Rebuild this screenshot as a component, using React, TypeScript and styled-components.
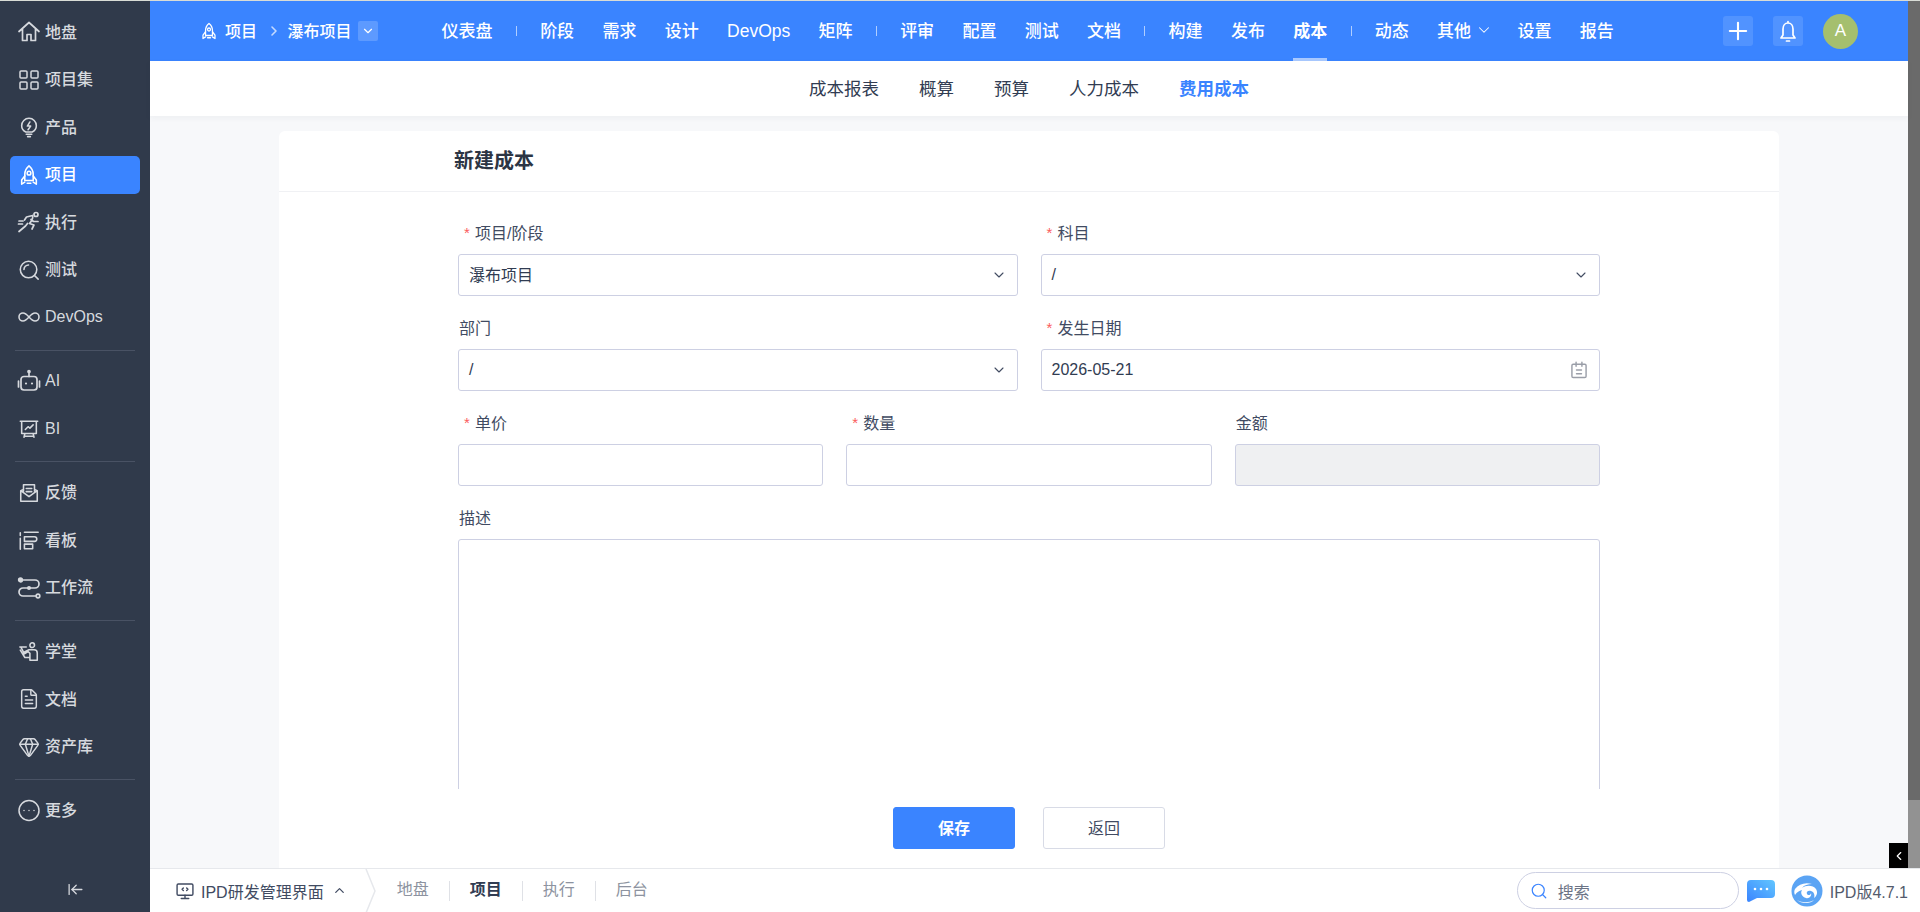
import React, { FC, ReactNode } from 'react';
import styled, { createGlobalStyle } from 'styled-components';
import {
    ArrowLeftToLine,
    ChevronDown,
    ChevronLeft,
    ChevronRight,
    ChevronUp,
    CircleEllipsis,
    FileText,
    Gem,
    Infinity as InfinityIcon,
    LayoutGrid,
    Plus,
    Search,
} from 'lucide-react';

const Global = createGlobalStyle`
  html, body {
    margin: 0;
    padding: 0;
    height: 912px;
    overflow: hidden;
    background: #fff;
    font-family: "Liberation Sans", "Noto Sans CJK SC", sans-serif;
    color: #313c52;
  }
  * { box-sizing: border-box; }
`;

const Line: FC<{ size?: number; children: ReactNode }> = ({ size = 22, children }) => (
    <svg width={size} height={size} viewBox="0 0 24 24" fill="none" stroke="currentColor" strokeWidth="1.7" strokeLinecap="round" strokeLinejoin="round">
        {children}
    </svg>
);

const HomeIcon: FC = () => (
    <Line size={24}>
        <path d="M2 11.500 12 2.500l10 9M5.500 9v11.500h4.500V14.500h4v6h4.500V9" />
    </Line>
);

const RocketIcon: FC<{ size?: number }> = ({ size }) => (
    <Line size={size}>
        <path d="M12 2c3 2.400 4.600 5.800 4.600 9.400V18H7.400v-6.600C7.400 7.800 9 4.400 12 2z" />
        <circle cx="12" cy="10" r="2" />
        <path d="M7.400 13 4 17.500V22l3.400-2.200M16.600 13l3.400 4.500V22l-3.400-2.200M10 21h4" />
    </Line>
);

const BulbIcon: FC = () => (
    <Line>
        <path d="M8.500 17.500C5.800 16 4 13.500 4 10.500a8 8 0 0 1 16 0c0 3-1.800 5.500-4.500 7z" />
        <path d="M9 20h6M10.500 22.500h3M13 6.500l-2.800 4.500h3.600L11 15" />
    </Line>
);

const RunnerIcon: FC = () => (
    <Line size={24}>
        <circle cx="19" cy="4.500" r="2" />
        <path d="M2 21.500 8.500 16l2-2.500M15.500 5.500 9.500 7l-2 3M15.500 5.500c1 2.500-.5 5-3 8l4.500 1.500-2 4M14 9.500l2.500 2H21M2 11h4M1.500 14h4" />
    </Line>
);

const LensIcon: FC = () => (
    <Line>
        <circle cx="11.500" cy="11.500" r="9" />
        <path d="m18 18 4 4M6.500 11.500a5 5 0 0 1 5-5" />
    </Line>
);

const BotIcon: FC = () => (
    <Line size={24}>
        <circle cx="12" cy="2.500" r="1" fill="currentColor" />
        <path d="M12 3v4.500M1.500 12v6M22.500 12v6" />
        <rect x="4" y="7.500" width="16" height="13.500" rx="3" />
        <path d="M9 14.500h.01M15 14.500h.01" strokeWidth="2.200" />
    </Line>
);

const BoardChartIcon: FC = () => (
    <Line>
        <path d="M2.500 3.500h19M4 3.500V17h16V3.500M7.500 17l-1 4M16.500 17l1 4M7 20h10" />
        <path d="m8 12.500 3-3 2 1.500 3.500-3.500" />
    </Line>
);

const MailIcon: FC = () => (
    <Line>
        <path d="M6 10V3h12v7M3 9.500V21h18V9.500L18 8M6 8 3 9.500l9 6.500 9-6.500M9 7h6M9 10.500h6" />
    </Line>
);

const KanbanIcon: FC = () => (
    <Line>
        <path d="M2.500 10v12M2.500 4v3M7 3.500h15M7 8.500h11a1.500 1.500 0 0 1 0 5H7zM7 16.500h9v5H7z" />
    </Line>
);

const RouteIcon: FC = () => (
    <Line size={24}>
        <circle cx="3.500" cy="4" r="1.800" fill="currentColor" />
        <circle cx="21" cy="20" r="1.800" />
        <path d="M5.500 4H18a4 4 0 0 1 0 8H6a4 4 0 0 0 0 8h13M10 12h4" />
        <circle cx="12" cy="12" r="1.200" fill="currentColor" />
    </Line>
);

const TeacherIcon: FC = () => (
    <Line>
        <circle cx="15.500" cy="4.500" r="2.500" />
        <path d="M2 6.500h7M3 6.500 7 14l4-2.500 2 2V21h8v-8a3.500 3.500 0 0 0-3.500-3.500H12L7 12M2.500 10l5 8h5" />
    </Line>
);

const BellIcon: FC = () => (
    <Line size={24}>
        <path d="M12 2.500v1.500M12 4c-3 0-5 2.500-5 6v6l-2 3h14l-2-3v-6c0-3.500-2-6-5-6zM10.500 22h3" />
    </Line>
);

const MonitorIcon: FC = () => (
    <Line size={20}>
        <rect x="2.500" y="3.500" width="19" height="13.500" rx="1.500" />
        <path d="M12 17v4M7.500 21h9M10 8.500 8.500 10l1.500 1.500M14 8.500l1.500 1.500-1.500 1.500" />
    </Line>
);

const CalendarIcon: FC = () => (
    <Line size={20}>
        <rect x="3.500" y="5" width="17" height="16" rx="1.500" />
        <path d="M8.500 2.500v5M15.500 2.500v5M9 12h6M9 16.500h6" />
    </Line>
);

const ChatIcon: FC = () => (
    <svg width="30" height="24" viewBox="0 0 30 24">
        <defs>
            <linearGradient id="chatFill" x1="0" y1="1" x2="1" y2="0">
                <stop offset="0" stopColor="#3a84ff" />
                <stop offset="1" stopColor="#62c6ff" />
            </linearGradient>
        </defs>
        <path d="M5 1h20a4 4 0 0 1 4 4v10a4 4 0 0 1-4 4H11l-8 4a2 2 0 0 1-2-2V5a4 4 0 0 1 4-4z" fill="url(#chatFill)" />
        <circle cx="9" cy="10" r="1.300" fill="#fff" />
        <circle cx="15" cy="10" r="1.300" fill="#fff" />
        <circle cx="21" cy="10" r="1.300" fill="#fff" />
    </svg>
);

const LogoIcon: FC = () => (
    <svg width="32" height="32" viewBox="0 0 32 32">
        <circle cx="16" cy="16" r="15.500" fill="#5ba4f4" />
        <path d="M4 14c4-5 10-7 17-5-4 0-8 1-10 4 4-3 11-3 14 1 2 3 1 7-2 9 1-3 0-6-3-7-3-1-5 1-4 3s4 1 4-1c1 3-2 6-5 5-4-1-6-5-4-8-3 1-5 2-7 5-1-2-1-4 0-6z" fill="#fff" />
        <path d="M6 25c5 3 12 3 17 0-3 4-13 4-17 0z" fill="#fff" />
    </svg>
);

const Shell = styled.div`
  width: 1920px;
  height: 912px;
  padding-top: 1px;
  background: #d9dcd6;
  display: flex;
  overflow: hidden;
`;

const Sidebar = styled.aside`
  width: 150px;
  flex: none;
  background: #303a4b;
  padding-top: 12px;
  display: flex;
  flex-direction: column;
  color: #d6d9de;
`;

const SideGroup = styled.div`
  display: flex;
  flex-direction: column;
  gap: 9.5px;
`;

const SideDivider = styled.div`
  height: 1px;
  margin: 13.5px 15px 11.5px;
  background: #495264;
`;

const SideItem = styled.div<{ $active?: boolean }>`
  height: 38px;
  margin: 0 10px;
  padding-left: 7px;
  border-radius: 5px;
  display: flex;
  align-items: center;
  gap: 4px;
  font-size: 16px;
  background: ${p => (p.$active ? '#3a84ff' : 'transparent')};
  color: ${p => (p.$active ? '#fff' : 'inherit')};
`;

const SideIcon = styled.span`
  width: 24px;
  height: 24px;
  flex: none;
  display: flex;
  align-items: center;
  justify-content: center;
`;

const SideLabel = styled.span<{ $latin: boolean }>`
  padding-bottom: ${p => (p.$latin ? 0 : 3)}px;
  font-weight: 500;
`;

const Collapse = styled.div`
  margin-top: auto;
  height: 34px;
  display: flex;
  justify-content: center;
  padding-top: 3px;
`;

const Right = styled.div`
  flex: 1;
  min-width: 0;
  display: flex;
  flex-direction: column;
`;

const Upper = styled.div`
  flex: 1;
  min-height: 0;
  display: flex;
  position: relative;
`;

const Content = styled.div`
  flex: 1;
  min-width: 0;
  display: flex;
  flex-direction: column;
  background: #f7f8fa;
`;

const Rail = styled.div`
  width: 12px;
  flex: none;
  background: #929292;
`;

const RailThumb = styled.div`
  height: 799px;
  background: #6a6a6a;
`;

const RailToggle = styled.div`
  position: absolute;
  right: 12px;
  bottom: 0;
  width: 19px;
  height: 25px;
  background: #000;
  color: #fff;
  display: flex;
  align-items: center;
  justify-content: center;
`;

const Header = styled.header`
  height: 60px;
  flex: none;
  background: #3a84ff;
  padding-left: 50px;
  display: flex;
  align-items: center;
  color: #fff;
`;

const Crumb = styled.div`
  display: flex;
  align-items: center;
  font-size: 16px;
  color: #fff;
`;

const CrumbText = styled.span`
  padding-bottom: 3px;
  font-weight: 500;
  &:nth-child(2) {
    margin-left: 7px;
  }
`;

const CrumbArrow = styled.span`
  margin: 0 6px 0 8.5px;
  display: flex;
  color: #c4daff;
`;

const CrumbSelect = styled.span`
  width: 20px;
  height: 20px;
  margin-left: 6px;
  border-radius: 2px;
  background: rgba(255, 255, 255, 0.18);
  display: flex;
  align-items: center;
  justify-content: center;
`;

const Nav = styled.nav`
  margin-left: 64px;
  height: 60px;
  display: flex;
  align-items: center;
  gap: 28.3px;
`;

const NavItem = styled.div<{ $active?: boolean; $latin?: boolean; $tight?: boolean }>`
  height: 60px;
  position: relative;
  margin-left: ${p => (p.$tight ? -4 : 0)}px;
  padding-bottom: ${p => (p.$latin ? 0 : 3)}px;
  display: flex;
  align-items: center;
  gap: 4px;
  font-size: ${p => (p.$latin ? 17.5 : 17)}px;
  font-weight: ${p => (p.$active ? 700 : 500)};
  white-space: nowrap;
  &::after {
    content: '';
    display: ${p => (p.$active ? 'block' : 'none')};
    position: absolute;
    left: 0;
    right: 0;
    bottom: 0;
    height: 3px;
    background: #a9c9ff;
  }
`;

const NavSep = styled.span`
  width: 1px;
  height: 10px;
  margin: 0 -5px;
  background: rgba(255, 255, 255, 0.6);
`;

const HeadTools = styled.div`
  margin-left: auto;
  margin-right: 50px;
  display: flex;
  align-items: center;
  gap: 20px;
`;

const ToolButton = styled.span`
  width: 30px;
  height: 30px;
  border-radius: 3px;
  background: rgba(255, 255, 255, 0.12);
  display: flex;
  align-items: center;
  justify-content: center;
`;

const Avatar = styled.span`
  width: 35px;
  height: 35px;
  border-radius: 50%;
  background: #a5bf6e;
  display: flex;
  align-items: center;
  justify-content: center;
  font-size: 17px;
`;

const SubNav = styled.div`
  height: 55px;
  flex: none;
  padding-bottom: 2px;
  background: #fff;
  box-shadow: 0 2px 6px rgba(40, 50, 70, 0.05);
  display: flex;
  align-items: center;
  justify-content: center;
  gap: 40px;
  position: relative;
`;

const SubItem = styled.span<{ $active?: boolean }>`
  font-size: 17.5px;
  color: ${p => (p.$active ? '#3a84ff' : '#313c52')};
  font-weight: ${p => (p.$active ? 700 : 400)};
`;

const Card = styled.section`
  width: 1500px;
  flex: 1;
  min-height: 0;
  margin: 15px 0 0 129px;
  background: #fff;
  border-radius: 6px 6px 0 0;
  display: flex;
  flex-direction: column;
`;

const CardTitle = styled.h2`
  margin: 0;
  height: 61px;
  flex: none;
  padding: 0 0 4px 175px;
  border-bottom: 1px solid #f0f1f4;
  display: flex;
  align-items: center;
  font-size: 20px;
  font-weight: 700;
  color: #2c3544;
`;

const FormScroll = styled.div`
  height: 597px;
  flex: none;
  overflow: hidden;
  padding: 31px 179px 0;
  display: flex;
  flex-direction: column;
  gap: 22px;
`;

const Row = styled.div<{ $cols: number }>`
  display: grid;
  grid-template-columns: repeat(${p => p.$cols}, 1fr);
  gap: 23px;
`;

const Field = styled.div`
  display: flex;
  flex-direction: column;
  gap: 11px;
`;

const FieldLabel = styled.label`
  height: 20px;
  padding: 0 0 2px 1px;
  display: flex;
  align-items: center;
  font-size: 16px;
  color: #414b62;
`;

const Required = styled.span`
  width: 11px;
  margin-left: 5px;
  color: #fb5b5b;
  font-size: 15px;
`;

const SelectBox = styled.div`
  height: 42px;
  padding: 0 10px;
  background: #fff;
  border: 1px solid #cdd0e3;
  border-radius: 3px;
  display: flex;
  align-items: center;
  justify-content: space-between;
  font-size: 16px;
  color: #313c52;
`;

const SelectText = styled.span<{ $cjk?: boolean }>`
  padding-bottom: ${p => (p.$cjk ? 3 : 0)}px;
`;

const SelectMark = styled.span`
  display: flex;
  color: #414b62;
`;

const DateMark = styled.span`
  display: flex;
  color: #9a9ea8;
`;

const TextInput = styled.input<{ $disabled?: boolean }>`
  height: 42px;
  width: 100%;
  padding: 0 10px;
  border: 1px solid #cdd0e3;
  border-radius: 3px;
  background: ${p => (p.$disabled ? '#eff0f2' : '#fff')};
`;

const TextArea = styled.textarea`
  height: 400px;
  width: 100%;
  flex: none;
  padding: 10px;
  border: 1px solid #cdd0e3;
  border-radius: 3px;
  background: #fff;
  resize: none;
`;

const Actions = styled.div`
  padding-top: 18px;
  display: flex;
  justify-content: center;
  gap: 28px;
`;

const Button = styled.button<{ $primary?: boolean }>`
  width: 122px;
  height: 42px;
  padding: 0 0 3px;
  border-radius: 3px;
  border: 1px solid ${p => (p.$primary ? '#3a84ff' : '#d8dbe6')};
  background: ${p => (p.$primary ? '#3a84ff' : '#fff')};
  color: ${p => (p.$primary ? '#fff' : '#414b62')};
  font: ${p => (p.$primary ? 700 : 400)} 16px "Liberation Sans", "Noto Sans CJK SC", sans-serif;
`;

const Footer = styled.footer`
  height: 44px;
  flex: none;
  background: #fff;
  border-top: 1px solid #e6e8ec;
  padding: 0 12px 0 25px;
  display: flex;
  align-items: center;
  position: relative;
`;

const AppSwitch = styled.div`
  display: flex;
  align-items: center;
  gap: 6px;
  font-size: 16px;
  color: #414b62;
`;

const SwitchArrow = styled.span`
  margin-left: 2px;
  display: flex;
`;

const Wedge = styled.svg`
  margin: 0 20px 0 18px;
  color: #e6e8ec;
`;

const Tabs = styled.div`
  display: flex;
  align-items: center;
`;

const Tab = styled.span<{ $active?: boolean }>`
  height: 20px;
  line-height: 18px;
  padding: 0 20px;
  font-size: 16px;
  color: ${p => (p.$active ? '#313c52' : '#8d93a0')};
  font-weight: ${p => (p.$active ? 700 : 400)};
  & + & {
    border-left: 1px solid #dfe1e6;
  }
  &:first-child {
    padding-left: 0;
  }
`;

const FootRight = styled.div`
  margin-left: auto;
  display: flex;
  align-items: center;
`;

const SearchBox = styled.div`
  width: 222px;
  height: 37px;
  padding-left: 12px;
  border: 1px solid #cdd0e3;
  border-radius: 19px;
  display: flex;
  align-items: center;
  gap: 10px;
  font-size: 16px;
  color: #6b7385;
`;

const SearchMark = styled.span`
  display: flex;
  color: #3a84ff;
`;

const ChatWrap = styled.span`
  margin: 0 15px 0 7px;
  display: flex;
`;

const Version = styled.span`
  margin-left: 7px;
  font-size: 16px;
  color: #535b6c;
  white-space: nowrap;
`;

const sideGroups: { label: string; icon: ReactNode; active?: boolean }[][] = [
    [
        { label: '地盘', icon: <HomeIcon /> },
        { label: '项目集', icon: <LayoutGrid size={24} strokeWidth={1.5} /> },
        { label: '产品', icon: <BulbIcon /> },
        { label: '项目', icon: <RocketIcon />, active: true },
        { label: '执行', icon: <RunnerIcon /> },
        { label: '测试', icon: <LensIcon /> },
        { label: 'DevOps', icon: <InfinityIcon size={24} strokeWidth={1.6} /> },
    ],
    [
        { label: 'AI', icon: <BotIcon /> },
        { label: 'BI', icon: <BoardChartIcon /> },
    ],
    [
        { label: '反馈', icon: <MailIcon /> },
        { label: '看板', icon: <KanbanIcon /> },
        { label: '工作流', icon: <RouteIcon /> },
    ],
    [
        { label: '学堂', icon: <TeacherIcon /> },
        { label: '文档', icon: <FileText size={22} strokeWidth={1.6} /> },
        { label: '资产库', icon: <Gem size={22} strokeWidth={1.6} /> },
    ],
    [{ label: '更多', icon: <CircleEllipsis size={25} strokeWidth={1.5} /> }],
];

const navGroups = [
    ['仪表盘'],
    ['阶段', '需求', '设计', 'DevOps', '矩阵'],
    ['评审', '配置', '测试', '文档'],
    ['构建', '发布', '成本'],
];

const isLatin = (text: string) => /^[A-Za-z]/.test(text);

const App: FC = () => (
    <Shell>
        <Global />
        <Sidebar>
            {sideGroups.map((group, i) => (
                <React.Fragment key={i}>
                    {i > 0 && <SideDivider />}
                    <SideGroup>
                        {group.map(item => (
                            <SideItem key={item.label} $active={item.active}>
                                <SideIcon>{item.icon}</SideIcon>
                                <SideLabel $latin={isLatin(item.label)}>{item.label}</SideLabel>
                            </SideItem>
                        ))}
                    </SideGroup>
                </React.Fragment>
            ))}
            <Collapse>
                <ArrowLeftToLine size={17} strokeWidth={1.8} />
            </Collapse>
        </Sidebar>
        <Right>
            <Upper>
                <Content>
                    <Header>
                        <Crumb>
                            <RocketIcon size={18} />
                            <CrumbText>项目</CrumbText>
                            <CrumbArrow><ChevronRight size={16} strokeWidth={2.4} /></CrumbArrow>
                            <CrumbText>瀑布项目</CrumbText>
                            <CrumbSelect><ChevronDown size={14} /></CrumbSelect>
                        </Crumb>
                        <Nav>
                            {navGroups.map((group, i) => (
                                <React.Fragment key={i}>
                                    {i > 0 && <NavSep />}
                                    {group.map(label => (
                                        <NavItem key={label} $active={label === '成本'} $latin={isLatin(label)}>{label}</NavItem>
                                    ))}
                                </React.Fragment>
                            ))}
                            <NavSep />
                            <NavItem>动态</NavItem>
                            <NavItem>其他<ChevronDown size={18} strokeWidth={1.4} /></NavItem>
                            <NavItem $tight>设置</NavItem>
                            <NavItem>报告</NavItem>
                        </Nav>
                        <HeadTools>
                            <ToolButton><Plus size={28} strokeWidth={1.8} /></ToolButton>
                            <ToolButton><BellIcon /></ToolButton>
                            <Avatar>A</Avatar>
                        </HeadTools>
                    </Header>
                    <SubNav>
                        <SubItem>成本报表</SubItem>
                        <SubItem>概算</SubItem>
                        <SubItem>预算</SubItem>
                        <SubItem>人力成本</SubItem>
                        <SubItem $active>费用成本</SubItem>
                    </SubNav>
                    <Card>
                        <CardTitle>新建成本</CardTitle>
                        <FormScroll>
                            <Row $cols={2}>
                                <Field>
                                    <FieldLabel><Required>*</Required>项目/阶段</FieldLabel>
                                    <SelectBox><SelectText $cjk>瀑布项目</SelectText><SelectMark><ChevronDown size={16} strokeWidth={1.6} /></SelectMark></SelectBox>
                                </Field>
                                <Field>
                                    <FieldLabel><Required>*</Required>科目</FieldLabel>
                                    <SelectBox><SelectText>/</SelectText><SelectMark><ChevronDown size={16} strokeWidth={1.6} /></SelectMark></SelectBox>
                                </Field>
                            </Row>
                            <Row $cols={2}>
                                <Field>
                                    <FieldLabel>部门</FieldLabel>
                                    <SelectBox><SelectText>/</SelectText><SelectMark><ChevronDown size={16} strokeWidth={1.6} /></SelectMark></SelectBox>
                                </Field>
                                <Field>
                                    <FieldLabel><Required>*</Required>发生日期</FieldLabel>
                                    <SelectBox><SelectText>2026-05-21</SelectText><DateMark><CalendarIcon /></DateMark></SelectBox>
                                </Field>
                            </Row>
                            <Row $cols={3}>
                                <Field>
                                    <FieldLabel><Required>*</Required>单价</FieldLabel>
                                    <TextInput />
                                </Field>
                                <Field>
                                    <FieldLabel><Required>*</Required>数量</FieldLabel>
                                    <TextInput />
                                </Field>
                                <Field>
                                    <FieldLabel>金额</FieldLabel>
                                    <TextInput $disabled readOnly />
                                </Field>
                            </Row>
                            <Field>
                                <FieldLabel>描述</FieldLabel>
                                <TextArea />
                            </Field>
                        </FormScroll>
                        <Actions>
                            <Button $primary>保存</Button>
                            <Button>返回</Button>
                        </Actions>
                    </Card>
                </Content>
                <Rail><RailThumb /></Rail>
                <RailToggle><ChevronLeft size={14} /></RailToggle>
            </Upper>
            <Footer>
                <AppSwitch>
                    <MonitorIcon />
                    IPD研发管理界面
                    <SwitchArrow><ChevronUp size={15} /></SwitchArrow>
                </AppSwitch>
                <Wedge width="12" height="44" viewBox="0 0 12 44" fill="none" stroke="currentColor" strokeWidth="1.5">
                    <path d="M1 0l9 22-9 22" />
                </Wedge>
                <Tabs>
                    <Tab>地盘</Tab>
                    <Tab $active>项目</Tab>
                    <Tab>执行</Tab>
                    <Tab>后台</Tab>
                </Tabs>
                <FootRight>
                    <SearchBox>
                        <SearchMark><Search size={18} strokeWidth={1.6} /></SearchMark>
                        搜索
                    </SearchBox>
                    <ChatWrap><ChatIcon /></ChatWrap>
                    <LogoIcon />
                    <Version>IPD版4.7.1</Version>
                </FootRight>
            </Footer>
        </Right>
    </Shell>
);

export default App;
